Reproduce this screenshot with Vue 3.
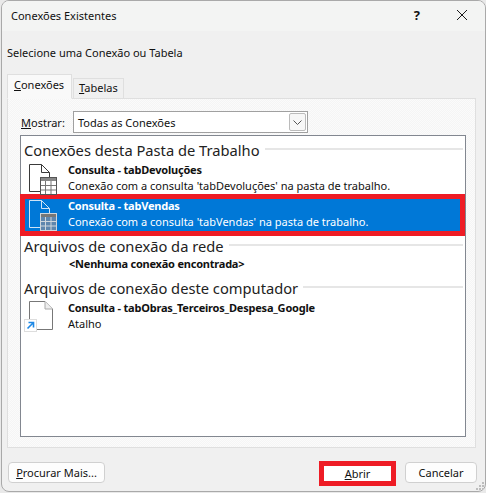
<template>
  <div class="dialog">
    <div class="titlebar">
      <span class="title">Conexões Existentes</span>
      <div class="title-btns">
        <span class="help">?</span>
        <svg class="close" width="12" height="12" viewBox="0 0 12 12"><path d="M1 1 L11 11 M11 1 L1 11" stroke="#1a1a1a" stroke-width="1" fill="none" /></svg>
      </div>
    </div>
    <div class="body">
      <p class="prompt">Selecione uma Conexão ou Tabela</p>
      <div class="tabs">
        <div class="tab active"><u>C</u>onexões</div>
        <div class="tab"><u>T</u>abelas</div>
      </div>
      <div class="panel">
        <div class="filter">
          <label class="filter-label"><u>M</u>ostrar:</label>
          <div class="select">
            <span>Todas as Conexões</span>
            <span class="select-btn">
              <svg width="9" height="5" viewBox="0 0 9 5"><path d="M0.5 0.5 L4.5 4.5 L8.5 0.5" stroke="#555" fill="none" /></svg>
            </span>
          </div>
        </div>
        <div class="list">
          <template v-for="group in groups" :key="group.title">
            <div class="group-head">
              <span>{{ group.title }}</span>
              <i class="group-line"></i>
            </div>
            <div v-if="!group.items.length" class="empty">&lt;Nenhuma conexão encontrada&gt;</div>
            <div v-for="item in group.items" :key="item.name" class="row" :class="{ selected: item.selected }">
              <svg v-if="item.kind === 'table'" class="icon" width="28" height="31" viewBox="0 0 28 31">
                <path d="M0.5 0.5 H12.5 L20.5 8.5 V13 M12.5 0.5 V8.5 H20.5 M11 27.5 H0.5 V0.5" :stroke="item.selected ? '#cfe3f6' : '#3a3a3a'" fill="none" />
                <rect x="11.5" y="13.5" width="16" height="17" :fill="item.selected ? '#5f86ad' : '#fff'" :stroke="item.selected ? '#cfd6dc' : '#555'" />
                <rect x="12" y="14" width="15" height="3" :fill="item.selected ? '#777' : '#888'" />
                <path d="M16.5 17 V30 M22 17 V30 M12 21.5 H27 M12 26 H27" :stroke="item.selected ? '#cfd6dc' : '#777'" fill="none" />
              </svg>
              <svg v-else class="icon link" width="28" height="31" viewBox="0 0 28 31">
                <path d="M0.5 28.5 V0.5 H16 L23.5 8 V28.5 Z" fill="#fff" stroke="#777" />
                <path d="M16 0.5 V8 H23.5" fill="#eee" stroke="#aaa" />
                <rect x="-4.5" y="18.5" width="12" height="12" fill="#fff" stroke="#ddd" />
                <path d="M-1.5 27.5 L4 22 M-0.5 21.5 H4.5 V26.5" stroke="#1e88e5" stroke-width="1.6" fill="none" />
              </svg>
              <div class="row-text">
                <div class="row-name">{{ item.name }}</div>
                <div class="row-desc">{{ item.desc }}</div>
              </div>
            </div>
          </template>
        </div>
      </div>
      <div class="footer">
        <button class="btn more"><u>P</u>rocurar Mais...</button>
        <div class="footer-right">
          <button class="btn open"><u>A</u>brir</button>
          <button class="btn cancel">Cancelar</button>
        </div>
      </div>
    </div>
    <svg class="grip" width="10" height="10" viewBox="0 0 10 10">
      <path d="M7 1h2v2h-2z M4 4h2v2h-2z M7 4h2v2h-2z M1 7h2v2h-2z M4 7h2v2h-2z M7 7h2v2h-2z" fill="#bdbdbd" />
    </svg>
  </div>
</template>

<script setup>
const groups = [
  {
    title: 'Conexões desta Pasta de Trabalho',
    items: [
      { name: 'Consulta - tabDevoluções', desc: "Conexão com a consulta 'tabDevoluções' na pasta de trabalho.", kind: 'table' },
      { name: 'Consulta - tabVendas', desc: "Conexão com a consulta 'tabVendas' na pasta de trabalho.", kind: 'table', selected: true }
    ]
  },
  { title: 'Arquivos de conexão da rede', items: [] },
  {
    title: 'Arquivos de conexão deste computador',
    items: [
      { name: 'Consulta - tabObras_Terceiros_Despesa_Google', desc: 'Atalho', kind: 'link' }
    ]
  }
];
</script>

<style>
html, body { background: #e9e9e9; }
</style>

<style scoped>
.dialog {
  box-sizing: border-box;
  position: relative;
  width: 485px;
  height: 492px;
  margin-left: 1px;
  background: #f0f0f0;
  border: 1px solid #a9a9a9;
  border-radius: 8px;
  font-family: "Noto Sans", sans-serif;
  font-size: 11px;
  color: #111;
  overflow: hidden;
}
.titlebar {
  box-sizing: border-box;
  height: 30px;
  background: #f3f4f3;
  display: flex;
  align-items: center;
  justify-content: space-between;
  padding: 0 17px 2px 9px;
}
.title-btns {
  display: flex;
  align-items: center;
  gap: 36px;
}
.help {
  font-size: 13px;
  font-weight: bold;
}
.close {
  display: block;
}
.body {
  padding: 0 8px 0 5px;
}
.prompt {
  margin: 15px 0 13px;
  line-height: 14px;
}
.tabs {
  display: flex;
  height: 25px;
  align-items: flex-end;
}
.tab {
  box-sizing: border-box;
  height: 20px;
  width: 51px;
  margin-left: 1px;
  padding: 1px 0 0 5px;
  border: 1px solid #dfdfdf;
  border-bottom: none;
  line-height: 16px;
}
.tab.active {
  height: 25px;
  width: 65px;
  margin-left: 0;
  padding: 2px 0 0 6px;
  background: #f9f9f9;
  border-bottom: 1px solid #f9f9f9;
  margin-bottom: -1px;
  position: relative;
}
.panel {
  box-sizing: border-box;
  width: 469px;
  height: 350px;
  background: repeating-conic-gradient(#fbfbfb 0 25%, #f5f5f5 0 50%) 0 0 / 2px 2px;
  border: 1px solid #dfdfdf;
  padding: 12px 9px 0 12px;
}
.filter {
  display: flex;
  align-items: center;
  gap: 7px;
  height: 22px;
}
.filter-label {
  width: 45px;
  padding-left: 1px;
}
.select {
  box-sizing: border-box;
  width: 235px;
  height: 22px;
  background: #fff;
  border: 1px solid #a0a0a0;
  display: flex;
  align-items: center;
  justify-content: space-between;
  padding-left: 4px;
}
.select-btn {
  box-sizing: border-box;
  width: 17px;
  height: 18px;
  margin-right: 1px;
  border: 1px solid #bbb;
  border-radius: 2px;
  background: #f7f7f7;
  display: flex;
  align-items: center;
  justify-content: center;
}
.list {
  box-sizing: border-box;
  width: 446px;
  height: 302px;
  margin-top: 2px;
  background: #fff;
  border: 1px solid #828790;
  padding-top: 4px;
}
.group-head {
  box-sizing: border-box;
  display: flex;
  align-items: center;
  gap: 5px;
  height: 20px;
  padding: 0 2px 0 3px;
  font-size: 14.7px;
  color: #222;
  white-space: nowrap;
}
.group-line {
  flex: 1;
  height: 2px;
  margin-bottom: 3px;
  background: #e6e6e6;
}
.empty {
  box-sizing: border-box;
  height: 22px;
  padding: 1px 0 0 48px;
  line-height: 14px;
  font-weight: bold;
  letter-spacing: -0.22px;
}
.row {
  box-sizing: border-box;
  display: flex;
  gap: 11px;
  height: 34px;
  padding: 3px 0 0 8px;
  align-items: flex-start;
}
.row.selected {
  box-sizing: content-box;
  height: 32px;
  margin-left: -1px;
  padding: 0 0 0 4px;
  border: 5px solid #ee1c25;
  background: #0078d7;
  color: #fff;
}
.icon {
  display: block;
  flex: none;
  overflow: visible;
  margin-top: 1px;
}
.icon.link {
  margin-top: 0;
}
.row-name {
  font-weight: bold;
  line-height: 14px;
  letter-spacing: -0.2px;
}
.row-desc {
  line-height: 15px;
  margin-top: 1px;
}
.footer {
  display: flex;
  justify-content: space-between;
  align-items: flex-start;
  margin-top: 14px;
}
.footer-right {
  display: flex;
  align-items: flex-start;
  gap: 9px;
}
.btn {
  box-sizing: border-box;
  height: 21px;
  background: #fdfdfd;
  border: 1px solid #d0d0d0;
  border-radius: 4px;
  font-family: inherit;
  font-size: inherit;
  color: #111;
  padding: 0;
}
.more {
  width: 97px;
  margin-left: 1px;
}
.open {
  width: 77px;
  height: 25px;
  margin-top: -1px;
  border: 5px solid #ee1c25;
  border-radius: 0;
  background: #fff;
}
.cancel {
  width: 72px;
}
.grip {
  position: absolute;
  right: 0;
  bottom: 0;
}
</style>
